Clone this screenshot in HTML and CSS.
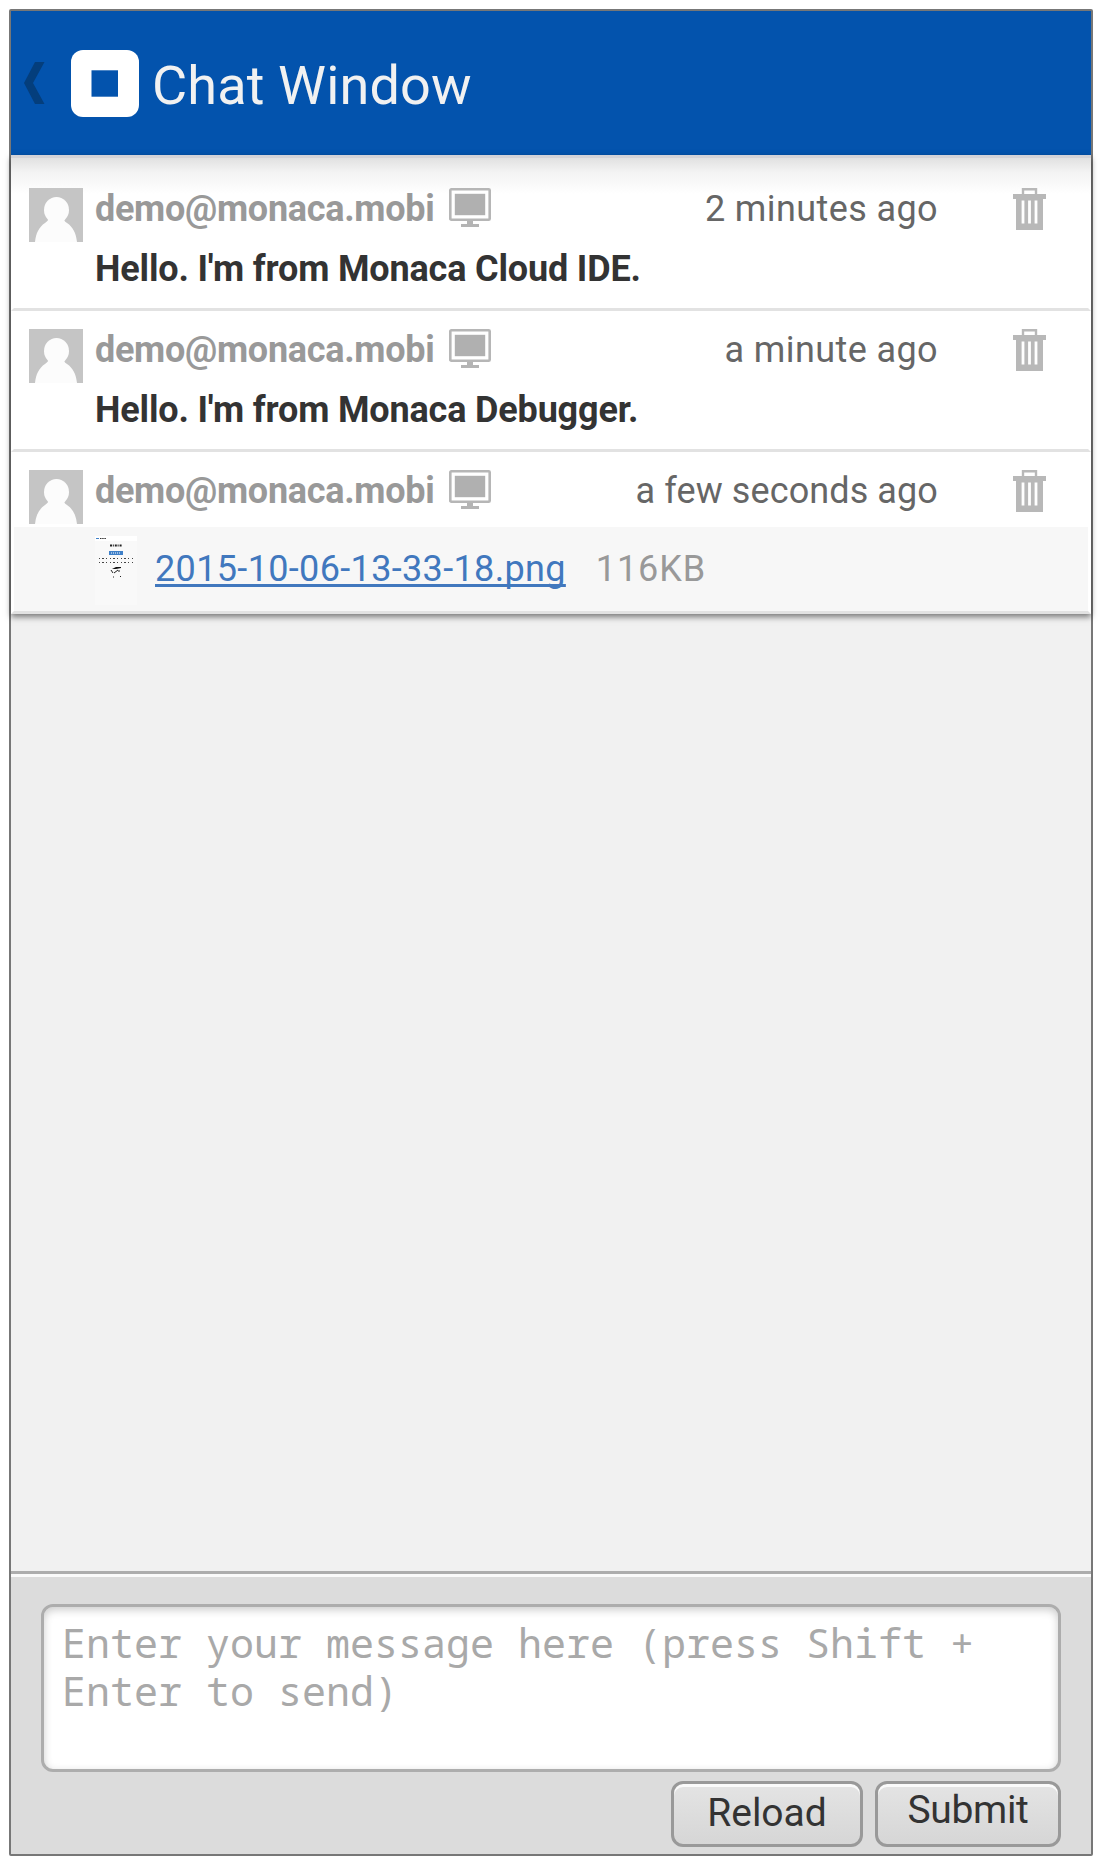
FILE: index.html
```html
<!DOCTYPE html>
<html lang="en">
<head>
<meta charset="utf-8">
<title>Chat Window</title>
<link rel="stylesheet" href="styles.css">
</head>
<body>
<svg class="defs" width="0" height="0">
  <defs>
    <symbol id="avatar" viewBox="0 0 54 54">
      <rect width="54" height="54" fill="#c5c5c5"/>
      <ellipse cx="27.500" cy="22" rx="12.500" ry="13" fill="#fcfcfc"/>
      <path d="M20 28h15c0 4 0 5 3 7 6 4 9 10 10 19H6c1-9 4-15 10-19 4-3 4-4 4-7z" fill="#fcfcfc"/>
    </symbol>
    <symbol id="monitor" viewBox="0 0 42 39">
      <rect x="1.300" y="1.300" width="39.400" height="30.400" rx="1" fill="#fff" stroke="#b6b6b6" stroke-width="2.600"/>
      <rect x="5.800" y="5.800" width="30.400" height="21.400" fill="#b0b0b0"/>
      <path d="M18 33h6v3h6v3H12v-3h6z" fill="#b4b4b4"/>
    </symbol>
    <symbol id="trash" viewBox="0 0 33 42">
      <path d="M10 6V1.200h13V6" fill="none" stroke="#b8b8b8" stroke-width="2.400"/>
      <path d="M0 6h33v5h-3v31H3V11H0z" fill="#b8b8b8"/>
      <path d="M10 12.500v23M16.500 12.500v23M23 12.500v23" stroke="#fff" stroke-width="2.800"/>
    </symbol>
  </defs>
</svg>
<div class="frame">
  <header class="header">
    <svg class="back" width="21" height="42" viewBox="0 0 21 42"><path d="M11 0h9.500L9 21l11.500 21H11L0 21z" fill="#043e7c"/></svg>
    <svg class="logo" width="68" height="67" viewBox="0 0 68 67"><rect width="68" height="67" rx="12" fill="#fff"/><rect x="20.500" y="20.300" width="26.500" height="26.400" fill="#0353ad"/></svg>
    <h1 class="title">Chat Window</h1>
  </header>
  <ul class="messages">
    <li class="message">
      <div class="meta">
        <svg class="avatar"><use href="#avatar"/></svg>
        <span class="name">demo@monaca.mobi</span>
        <svg class="monitor"><use href="#monitor"/></svg>
        <span class="time">2 minutes ago</span>
        <svg class="trash"><use href="#trash"/></svg>
      </div>
      <p class="text">Hello. I'm from Monaca Cloud IDE.</p>
    </li>
    <li class="message">
      <div class="meta">
        <svg class="avatar"><use href="#avatar"/></svg>
        <span class="name">demo@monaca.mobi</span>
        <svg class="monitor"><use href="#monitor"/></svg>
        <span class="time">a minute ago</span>
        <svg class="trash"><use href="#trash"/></svg>
      </div>
      <p class="text">Hello. I'm from Monaca Debugger.</p>
    </li>
    <li class="message">
      <div class="meta">
        <svg class="avatar"><use href="#avatar"/></svg>
        <span class="name">demo@monaca.mobi</span>
        <svg class="monitor"><use href="#monitor"/></svg>
        <span class="time recent">a few seconds ago</span>
        <svg class="trash"><use href="#trash"/></svg>
      </div>
      <div class="attachment">
        <svg class="thumb" width="42" height="69" viewBox="0 0 42 69">
          <rect width="42" height="69" fill="#f9f9f9"/>
          <rect width="42" height="5" fill="#fff"/>
          <path d="M1 2.500h3" stroke="#3f80c8"/>
          <path d="M5 2.500h6" stroke="#333" stroke-dasharray="1.500 .7"/>
          <path d="M15 9.500h12" stroke="#222" stroke-width="2" stroke-dasharray="2 .8 1 1"/>
          <rect x="14" y="15" width="14" height="4" fill="#3f80c8"/>
          <path d="M16 17h10" stroke="#fff" stroke-dasharray="1 1"/>
          <path d="M4 22.500h35M4 26.500h34" stroke="#444" stroke-dasharray="1 2 2 2 1 3"/>
          <path d="M17 33l4-2h5v1l-5 1z" fill="#111"/>
          <path d="M16 34l2 3M19 37l4-3M24 34v2M18 41h1M25 41l1-1" fill="none" stroke="#222"/>
        </svg>
        <a class="file">2015-10-06-13-33-18.png</a>
        <span class="size">116KB</span>
      </div>
    </li>
  </ul>
  <footer class="composer">
    <textarea class="input" placeholder="Enter your message here (press Shift + Enter to send)"></textarea>
    <div class="actions">
      <button class="button reload">Reload</button>
      <button class="button submit">Submit</button>
    </div>
  </footer>
</div>
</body>
</html>
```
FILE: styles.css
```css
* { box-sizing: border-box; }
body {
  margin: 0;
  padding: 9px;
  height: 1864px;
  background: #fff;
  color: #333;
  font-family: Roboto, "Liberation Sans", sans-serif;
  font-size: 36px;
}
.defs { display: none; }
.frame {
  display: flex;
  flex-direction: column;
  width: 1084px;
  height: 1847px;
  border: 2px solid #777;
  border-radius: 2px;
  background: #f1f1f1;
}
.header {
  display: flex;
  flex: none;
  height: 144px;
  padding-left: 13px;
  background: #0353ad;
}
.back { margin-top: 51px; }
.logo { margin: 39px 0 0 26px; }
.title {
  margin: 39px 0 0 13px;
  color: #f1f1f1;
  font-size: 54px;
  font-weight: 400;
  line-height: 72px;
  letter-spacing: .15px;
  white-space: nowrap;
}
.messages {
  flex: none;
  margin: 0;
  padding: 12px 0 0;
  border-top: 3px solid #d3d3d8;
  list-style: none;
  background: linear-gradient(#e1e1e1, #f3f3f3 14px, #fff 36px);
  box-shadow: 0 3px 6px rgba(0, 0, 0, .5);
}
.message {
  border: solid transparent;
  border-width: 0 3px 3px;
  border-bottom-color: #e2e2e2;
}
.meta {
  display: flex;
  height: 75px;
  padding: 18px 0 0 15px;
  line-height: 42px;
  white-space: nowrap;
}
.avatar { flex: none; width: 54px; height: 54px; }
.name {
  flex: none;
  width: 366px;
  padding-left: 12px;
  color: #999;
  font-weight: 700;
  letter-spacing: -.3px;
}
.monitor { flex: none; width: 42px; height: 39px; }
.time {
  flex: none;
  width: 447px;
  color: #666;
  letter-spacing: .4px;
  text-align: right;
}
.recent { letter-spacing: .1px; }
.trash { flex: none; width: 33px; height: 42px; margin-left: 75px; }
.text {
  height: 63px;
  margin: 0;
  padding: 3px 0 0 81px;
  font-weight: 700;
  letter-spacing: -.17px;
  line-height: 42px;
  white-space: nowrap;
}
.attachment {
  display: flex;
  height: 84px;
  padding: 9px 0 0 81px;
  background: #f7f7f7;
  line-height: 66px;
}
.file {
  margin-left: 18px;
  color: #4178be;
  letter-spacing: .35px;
  text-decoration: underline;
  text-decoration-thickness: 3px;
  text-underline-offset: 3px;
  text-decoration-skip-ink: none;
}
.size { margin-left: 30px; color: #999; letter-spacing: .9px; }
.composer {
  flex: none;
  height: 283px;
  margin-top: auto;
  padding: 27px 30px 0;
  border-top: 3px solid #adadad;
  background: #dcdcdc;
  box-shadow: inset 0 3px #fafafa;
}
.input {
  display: block;
  width: 100%;
  height: 168px;
  margin-top: 3px;
  padding: 12px 18px;
  border: 3px solid #adadad;
  border-radius: 12px;
  background: #fff;
  box-shadow: inset 0 3px 9px rgba(0, 0, 0, .2);
  font: 40px/48px "Droid Sans Mono", "Noto Sans Mono", "DejaVu Sans Mono", monospace;
  resize: none;
  overflow: hidden;
}
.input::placeholder { color: #a9a9a9; opacity: 1; }
.actions { display: flex; justify-content: flex-end; gap: 12px; margin-top: 9px; }
.button {
  height: 66px;
  padding: 0 0 3px;
  border: 3px solid #999;
  border-radius: 12px;
  background: linear-gradient(#e4e4e4, #d6d6d6);
  box-shadow: inset 0 3px #fafafa;
  color: #333;
  font: 39px/46px Roboto, sans-serif;
}
.reload { width: 192px; }
.submit { width: 186px; padding-bottom: 9px; letter-spacing: -.35px; }
```
